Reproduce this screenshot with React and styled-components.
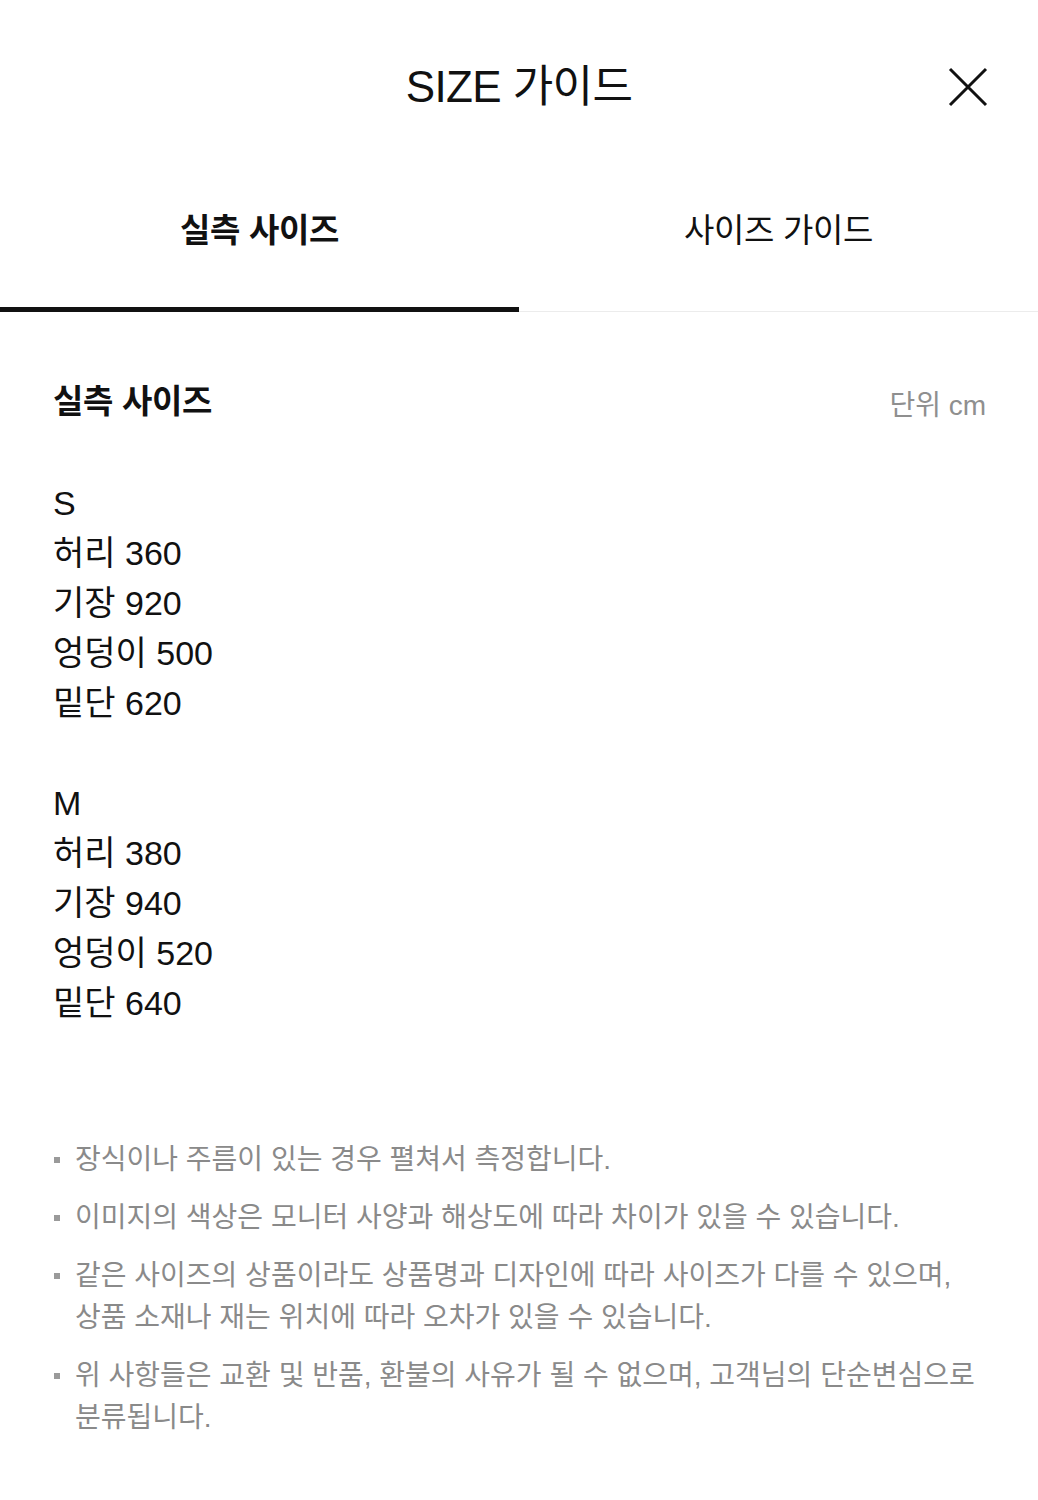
import React, { useState } from "react";
import styled, { createGlobalStyle } from "styled-components";

const GlobalStyle = createGlobalStyle`
  * { box-sizing: border-box; }
  body {
    margin: 0;
    background: #ffffff;
    font-family: "Liberation Sans", "Noto Sans CJK KR", sans-serif;
    color: #111111;
  }
`;

const Page = styled.div`
  width: 1038px;
  min-height: 1500px;
  background: #fff;
`;

const Header = styled.header`
  display: grid;
  grid-template-columns: 1fr auto 1fr;
  align-items: center;
  height: 174px;
`;

const Title = styled.h1`
  grid-column: 2;
  margin: 0;
  font-size: 44px;
  font-weight: 400;
  letter-spacing: -0.6px;
  line-height: 1;
  color: #111;
`;

const CloseButton = styled.button`
  justify-self: end;
  margin-right: 48px;
  width: 44px;
  height: 44px;
  padding: 0;
  border: none;
  background: none;
  display: flex;
  align-items: center;
  justify-content: center;
  cursor: pointer;
`;

const TabList = styled.div`
  display: flex;
`;

const Tab = styled.button`
  flex: 1;
  height: 138px;
  padding: 37px 0 0;
  border: none;
  background: none;
  border-bottom: ${(p) => (p.$active ? "5px solid #111" : "1px solid #ececec")};
  display: flex;
  justify-content: center;
  align-items: flex-start;
  font-family: "Liberation Sans", "Noto Sans CJK KR", sans-serif;
  font-size: 33px;
  line-height: 40px;
  letter-spacing: -0.3px;
  font-weight: ${(p) => (p.$active ? 700 : 400)};
  color: #111;
  cursor: pointer;
`;

const Content = styled.section`
  padding: 66px 52px 0 53px;
`;

const SectionHead = styled.div`
  display: flex;
  justify-content: space-between;
  align-items: center;
`;

const SectionTitle = styled.h2`
  margin: 0;
  font-size: 33px;
  line-height: 40px;
  font-weight: 700;
  letter-spacing: -0.3px;
`;

const Unit = styled.span`
  font-size: 28px;
  line-height: 40px;
  padding-top: 8px;
  color: #8f8f8f;
`;

const SizeList = styled.div`
  margin-top: 52px;
  display: flex;
  flex-direction: column;
  gap: 50px;
`;

const SizeGroup = styled.div`
  display: flex;
  flex-direction: column;
`;

const Line = styled.div`
  font-size: 34px;
  line-height: 50px;
  color: #111;
`;

const Notes = styled.ul`
  list-style: none;
  margin: 111px 0 0;
  padding: 0;
  display: flex;
  flex-direction: column;
  gap: 16px;
`;

const Note = styled.li`
  position: relative;
  padding-left: 22px;
  font-size: 28px;
  line-height: 42px;
  color: #8a8a8a;
  white-space: nowrap;

  &::before {
    content: "";
    position: absolute;
    left: 1px;
    top: 18px;
    width: 6px;
    height: 6px;
    background: #9a9a9a;
  }
`;

const sizes = [
  { name: "S", rows: [["허리", 360], ["기장", 920], ["엉덩이", 500], ["밑단", 620]] },
  { name: "M", rows: [["허리", 380], ["기장", 940], ["엉덩이", 520], ["밑단", 640]] },
];

const notes = [
  ["장식이나 주름이 있는 경우 펼쳐서 측정합니다."],
  ["이미지의 색상은 모니터 사양과 해상도에 따라 차이가 있을 수 있습니다."],
  [
    "같은 사이즈의 상품이라도 상품명과 디자인에 따라 사이즈가 다를 수 있으며,",
    "상품 소재나 재는 위치에 따라 오차가 있을 수 있습니다.",
  ],
  ["위 사항들은 교환 및 반품, 환불의 사유가 될 수 없으며, 고객님의 단순변심으로", "분류됩니다."],
];

function CloseIcon() {
  return (
    <svg width="40" height="40" viewBox="0 0 40 40" fill="none">
      <path d="M2 2L38 38M38 2L2 38" stroke="#111" strokeWidth="3" />
    </svg>
  );
}

export default function App() {
  const [tab, setTab] = useState(0);
  return (
    <Page>
      <GlobalStyle />
      <Header>
        <Title>SIZE 가이드</Title>
        <CloseButton aria-label="닫기">
          <CloseIcon />
        </CloseButton>
      </Header>
      <TabList>
        <Tab $active={tab === 0} onClick={() => setTab(0)}>실측 사이즈</Tab>
        <Tab $active={tab === 1} onClick={() => setTab(1)}>사이즈 가이드</Tab>
      </TabList>
      <Content>
        <SectionHead>
          <SectionTitle>실측 사이즈</SectionTitle>
          <Unit>단위 cm</Unit>
        </SectionHead>
        <SizeList>
          {sizes.map((s) => (
            <SizeGroup key={s.name}>
              <Line>{s.name}</Line>
              {s.rows.map(([label, val]) => (
                <Line key={label}>
                  {label} {val}
                </Line>
              ))}
            </SizeGroup>
          ))}
        </SizeList>
        <Notes>
          {notes.map((lines, i) => (
            <Note key={i}>
              {lines.map((l, j) => (
                <React.Fragment key={j}>
                  {j > 0 && <br />}
                  {l}
                </React.Fragment>
              ))}
            </Note>
          ))}
        </Notes>
      </Content>
    </Page>
  );
}
